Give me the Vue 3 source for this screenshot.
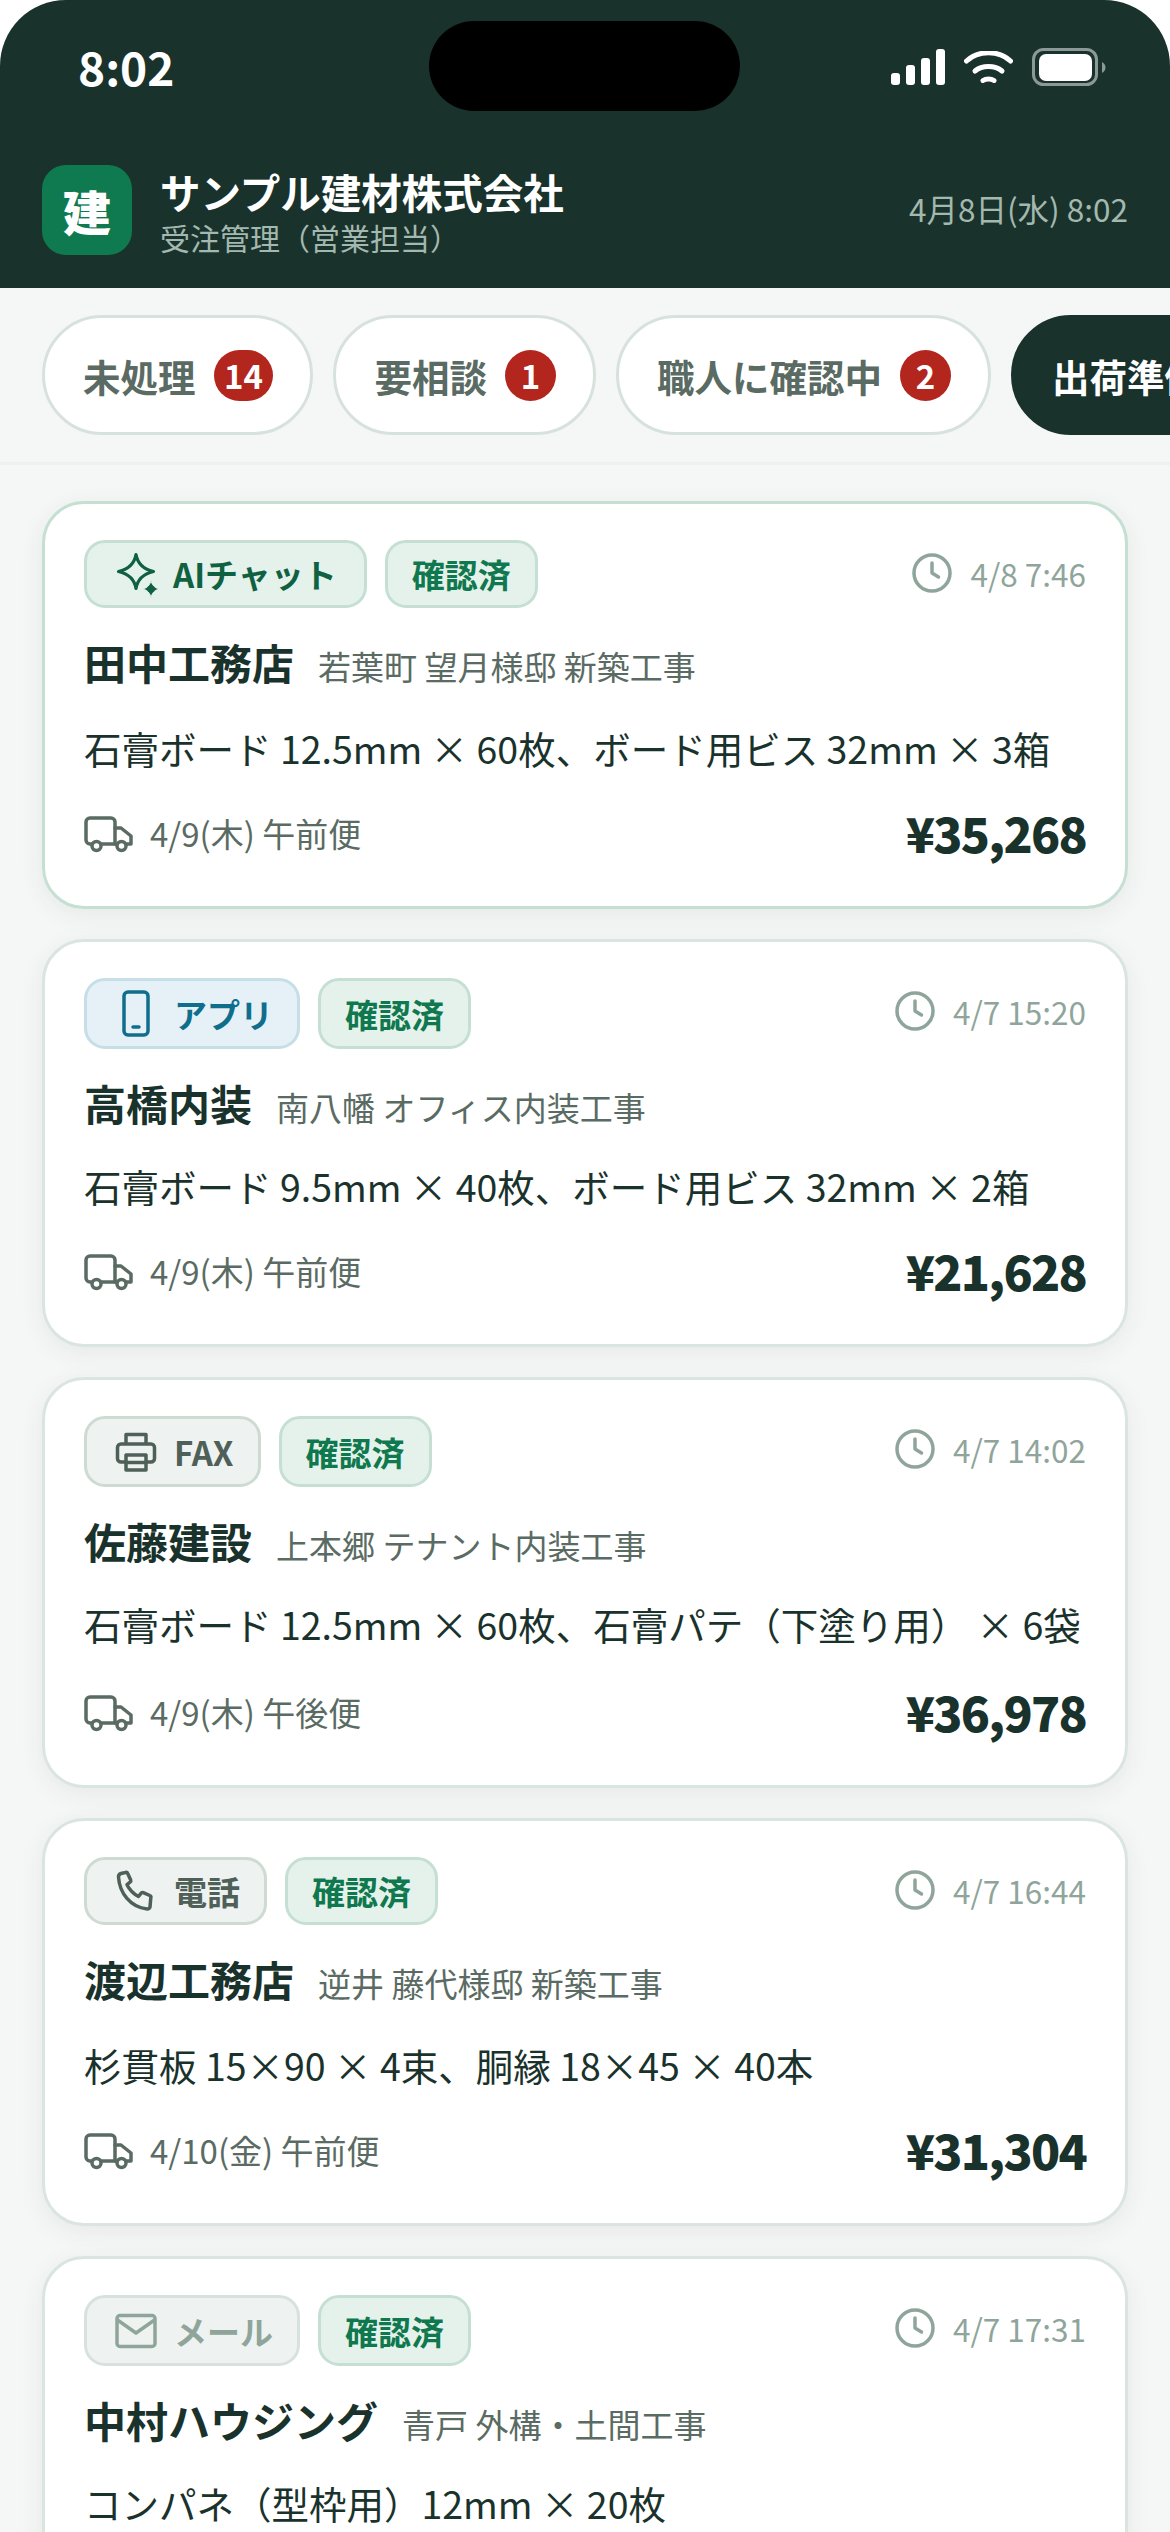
<script setup>
const tabs = [
  { label: '未処理', count: 14 },
  { label: '要相談', count: 1 },
  { label: '職人に確認中', count: 2 },
  { label: '出荷準備', count: 0, active: true },
]
const cards = [
  { ch: 'ai', chLabel: 'AIチャット', time: '4/8 7:46', name: '田中工務店', site: '若葉町 望月様邸 新築工事', items: '石膏ボード 12.5mm × 60枚、ボード用ビス 32mm × 3箱', ship: '4/9(木) 午前便', price: '¥35,268', first: true },
  { ch: 'app', chLabel: 'アプリ', time: '4/7 15:20', name: '高橋内装', site: '南八幡 オフィス内装工事', items: '石膏ボード 9.5mm × 40枚、ボード用ビス 32mm × 2箱', ship: '4/9(木) 午前便', price: '¥21,628', tall: true },
  { ch: 'fax', chLabel: 'FAX', time: '4/7 14:02', name: '佐藤建設', site: '上本郷 テナント内装工事', items: '石膏ボード 12.5mm × 60枚、石膏パテ（下塗り用） × 6袋', ship: '4/9(木) 午後便', price: '¥36,978', tall: true, roomy: true },
  { ch: 'tel', chLabel: '電話', time: '4/7 16:44', name: '渡辺工務店', site: '逆井 藤代様邸 新築工事', items: '杉貫板 15×90 × 4束、胴縁 18×45 × 40本', ship: '4/10(金) 午前便', price: '¥31,304' },
  { ch: 'mail', chLabel: 'メール', time: '4/7 17:31', name: '中村ハウジング', site: '青戸 外構・土間工事', items: 'コンパネ（型枠用）12mm × 20枚', tall: true },
]
</script>

<template>
  <div class="phone">
    <header class="header">
      <div class="status">
        <span class="clock">8:02</span>
        <div class="island"></div>
        <div class="status-icons">
          <svg width="54" height="36" viewBox="0 0 54 36"><rect x="0" y="24" width="9" height="12" rx="3" fill="#fff"/><rect x="15" y="16" width="9" height="20" rx="3" fill="#fff"/><rect x="30" y="9" width="9" height="27" rx="3" fill="#fff"/><rect x="45" y="0" width="9" height="36" rx="3" fill="#fff"/></svg>
          <svg width="49" height="32" viewBox="0 0 49 32" fill="none" stroke="#fff" stroke-width="5" stroke-linecap="round"><path d="M2.500 10C14 -1 35 -1 46.500 10"/><path d="M11 20C18 14 31 14 38 20"/><path d="M19 29.500C22 27.500 27 27.500 30 29.500"/></svg>
          <svg width="74" height="38" viewBox="0 0 74 38"><rect x="1.500" y="1.500" width="63" height="35" rx="10" fill="none" stroke="#fff" stroke-opacity=".5" stroke-width="3"/><rect x="7" y="6" width="53" height="27" rx="7" fill="#fff"/><path d="M70 14v11c2-1 3.500-3 3.500-5.500s-1.500-4.500-3.500-5.500z" fill="#fff" fill-opacity=".5"/></svg>
        </div>
      </div>
      <div class="brand-row">
        <div class="logo">建</div>
        <div class="brand">
          <div class="company">サンプル建材株式会社</div>
          <div class="role">受注管理（営業担当）</div>
        </div>
        <div class="now">4月8日(水) 8:02</div>
      </div>
    </header>

    <nav class="tabs">
      <div v-for="t in tabs" :key="t.label" class="tab" :class="{ active: t.active }">
        <span>{{ t.label }}</span>
        <span v-if="t.count" class="badge">{{ t.count }}</span>
      </div>
    </nav>

    <main class="list">
      <article v-for="c in cards" :key="c.name" class="card" :class="{ first: c.first, tall: c.tall, roomy: c.roomy }">
        <div class="top">
          <div class="tags">
            <span class="tag channel" :class="'ch-' + c.ch">
              <svg v-if="c.ch === 'ai'" class="ic" viewBox="0 0 42 42" fill="none" stroke="currentColor" stroke-width="3.200" stroke-linejoin="round"><path d="M21 1.500C22.500 10.500 28 16 38.500 18.500 28 21 22.500 26.500 21 35.500 19.500 26.500 14 21 3.500 18.500 14 16 19.500 10.500 21 1.500Z"/><path d="M36 27c.8 5 3.500 7.500 8 9-4.500 1.500-7.200 4-8 9-.8-5-3.500-7.500-8-9 4.500-1.500 7.200-4 8-9z" fill="currentColor" stroke="#e5f2eb" stroke-width="1"/></svg>
              <svg v-else-if="c.ch === 'app'" class="ic ic-tall" viewBox="0 0 42 48" fill="none" stroke="currentColor" stroke-width="3.500" stroke-linecap="round"><rect x="9" y="2" width="24" height="43" rx="4"/><path d="M18 37h6"/></svg>
              <svg v-else-if="c.ch === 'fax'" class="ic" viewBox="0 0 42 42" fill="none" stroke="currentColor" stroke-width="3.500" stroke-linejoin="round"><path d="M11 13V3.500h20V13"/><path d="M11 31H6a3.500 3.500 0 0 1-3.500-3.500v-11A3.500 3.500 0 0 1 6 13h30a3.500 3.500 0 0 1 3.500 3.500v11A3.500 3.500 0 0 1 36 31h-5"/><path d="M11 24h20v15H11z"/><path d="M11 31.500h20"/></svg>
              <svg v-else-if="c.ch === 'tel'" class="ic" viewBox="0 0 42 42" fill="none" stroke="currentColor" stroke-width="3.500" stroke-linejoin="round"><path d="M6 3.500 10.500 2.500c1-.3 1.800 0 2.200 1l3 6.500c.3.800.1 1.500-.5 2l-3.200 2.700c2.500 5 6.300 9 11.500 11.800l2.700-3.300c.6-.7 1.300-.8 2.100-.5l6.500 2.800c1 .4 1.300 1.200 1 2.100L35 37c-.4 1.300-1.500 2-2.900 1.900C15.500 37.500 4.500 23 3.500 7c-.1-1.800.9-3 2.500-3.500z"/></svg>
              <svg v-else class="ic" viewBox="0 0 42 42" fill="none" stroke="currentColor" stroke-width="3.500" stroke-linejoin="round"><rect x="2" y="5.500" width="38" height="31" rx="3"/><path d="M2.500 10 21 23 39.500 10"/></svg>
              <span>{{ c.chLabel }}</span>
            </span>
            <span class="tag ok">確認済</span>
          </div>
          <div class="time">
            <svg width="40" height="40" viewBox="0 0 40 40" fill="none" stroke="#8fa59b" stroke-width="3.500" stroke-linecap="round" stroke-linejoin="round"><circle cx="20" cy="20" r="18"/><path d="M20 10v10l6.500 4"/></svg>
            <span>{{ c.time }}</span>
          </div>
        </div>
        <div class="title">
          <span class="name">{{ c.name }}</span>
          <span class="site">{{ c.site }}</span>
        </div>
        <div class="items">{{ c.items }}</div>
        <div v-if="c.price" class="foot">
          <div class="ship">
            <svg class="truck" width="50" height="38" viewBox="0 0 50 38" fill="none" stroke="#5a6b63" stroke-width="3.500" stroke-linejoin="round" stroke-linecap="round"><path d="M8 28H6a4 4 0 0 1-4-4V6a4 4 0 0 1 4-4h21a4 4 0 0 1 4 4v22"/><path d="M17 28h16"/><path d="M31 12h6l10 8v8h-5"/><circle cx="12.500" cy="30" r="4.500"/><circle cx="37.500" cy="30" r="4.500"/></svg>
            <span>{{ c.ship }}</span>
          </div>
          <div class="price">{{ c.price }}</div>
        </div>
      </article>
    </main>
  </div>
</template>

<style>
html, body { margin: 0; background: #fff; }
</style>

<style scoped>
.phone {
  width: 1170px;
  height: 2532px;
  overflow: hidden;
  background: #f5f7f6;
  border-radius: 66px 66px 0 0;
  font-family: "Noto Sans CJK JP", "Noto Sans", sans-serif;
  color: #1a322c;
}
.header {
  height: 288px;
  box-sizing: border-box;
  background: #1a322c;
  color: #fff;
}
.status {
  height: 165px;
  position: relative;
  display: flex;
  justify-content: space-between;
  align-items: flex-start;
  padding: 38px 64px 0 78px;
  box-sizing: border-box;
}
.clock { font-size: 46px; line-height: 56px; font-weight: 700; }
.island {
  position: absolute;
  left: 429px;
  top: 21px;
  width: 311px;
  height: 90px;
  border-radius: 45px;
  background: #000;
}
.status-icons { display: flex; align-items: center; gap: 19px; margin-top: 10px; }
.brand-row { display: flex; align-items: center; padding: 0 42px; height: 90px; }
.logo {
  width: 90px;
  height: 90px;
  flex: none;
  border-radius: 24px;
  background: #0f7a50;
  display: flex;
  align-items: center;
  justify-content: center;
  font-size: 48px;
  font-weight: 900;
}
.brand { margin-left: 28px; flex: 1; padding-top: 4px; }
.company { font-size: 40.500px; line-height: 46px; font-weight: 700; }
.role { font-size: 30px; line-height: 36px; color: #a3b8ae; margin-top: 4px; }
.now { font-size: 31.500px; color: #a3b8ae; margin-bottom: 4px; }

.tabs {
  display: flex;
  gap: 20px;
  padding: 27px 42px;
  border-bottom: 3px solid #eef1ef;
  overflow: hidden;
}
.tab {
  flex: none;
  height: 120px;
  box-sizing: border-box;
  display: flex;
  align-items: center;
  gap: 18px;
  padding: 0 37px 0 38px;
  border: 3px solid #d8e2dd;
  border-radius: 60px;
  background: #fff;
  color: #5a6b63;
  font-size: 37.500px;
  font-weight: 700;
}
.tab.active { background: #1a322c; border-color: #1a322c; color: #fff; }
.badge {
  min-width: 51px;
  height: 51px;
  box-sizing: border-box;
  padding: 0 10.500px;
  border-radius: 26px;
  background: #b3261e;
  color: #fff;
  font-size: 33px;
  font-weight: 700;
  line-height: 51px;
  text-align: center;
}

.list { display: flex; flex-direction: column; gap: 30px; padding: 36px 42px 0; }
.card {
  flex: none;
  box-sizing: border-box;
  padding: 36px 39px 43px;
  background: #fff;
  border: 3px solid #dbe5e0;
  border-radius: 42px;
  box-shadow: 0 6px 24px rgba(26, 50, 44, .07);
}
.card.first { border-color: #c5e0d2; }
.top { display: flex; justify-content: space-between; align-items: flex-start; }
.tags { display: flex; gap: 18px; height: 68px; }
.tall .tags { height: 71px; }
.tag {
  display: inline-flex;
  align-items: center;
  box-sizing: border-box;
  height: 100%;
  padding: 0 24px;
  border: 3px solid;
  border-radius: 21px;
  font-size: 33px;
  font-weight: 700;
}
.channel { gap: 17px; padding: 0 24px 0 28px; }
.ic { width: 42px; height: 42px; flex: none; overflow: visible; }
.ic-tall { height: 48px; }
.ok { color: #10784f; background: #e5f2eb; border-color: #c5e0d2; }
.ch-ai { gap: 16px; padding-right: 27px; color: #0f6142; background: #e5f2eb; border-color: #c5e0d2; }
.ch-app { color: #0f6e8c; background: #e5f1f6; border-color: #c6dee6; }
.ch-fax, .ch-tel { color: #4e6058; background: #eef2f0; border-color: #cddbd3; }
.ch-mail { color: #8fa59b; background: #eef2f0; border-color: #d8e2dd; }
.time { display: flex; align-items: center; gap: 18px; color: #8fa59b; font-size: 31.500px; height: 66px; }
.title { display: flex; align-items: baseline; gap: 24px; margin-top: 23px; height: 60px; }
.tall .title { height: 57px; }
.name { font-size: 42px; font-weight: 700; }
.site { font-size: 33px; color: #5a6b63; }
.items { font-size: 37.500px; line-height: 54px; margin-top: 30px; white-space: nowrap; }
.foot { display: flex; justify-content: space-between; align-items: center; margin-top: 28px; height: 60px; }
.roomy .foot { margin-top: 31px; }
.ship { display: flex; align-items: center; gap: 16px; font-size: 33px; color: #5a6b63; }
.truck { margin-top: 4px; }
.price { font-size: 48px; font-weight: 800; letter-spacing: -1.700px; margin-top: -2px; }
</style>
